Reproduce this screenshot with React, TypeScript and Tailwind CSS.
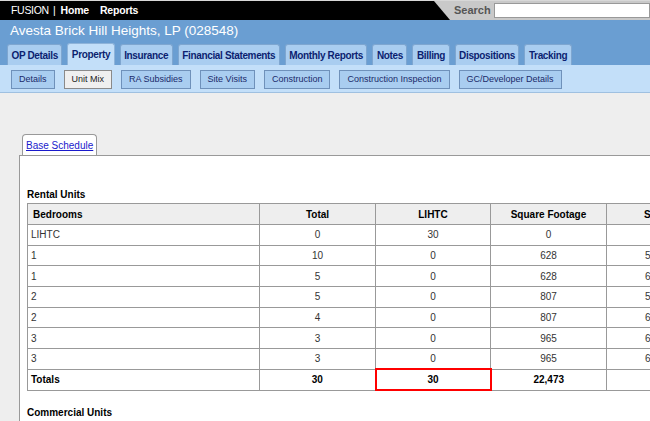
import React from "react";

const tabs = [
  "OP Details",
  "Property",
  "Insurance",
  "Financial Statements",
  "Monthly Reports",
  "Notes",
  "Billing",
  "Dispositions",
  "Tracking",
];

const subTabs = [
  "Details",
  "Unit Mix",
  "RA Subsidies",
  "Site Visits",
  "Construction",
  "Construction Inspection",
  "GC/Developer Details",
];

const rows = [
  ["LIHTC", "0", "30", "0", ""],
  ["1", "10", "0", "628", "5"],
  ["1", "5", "0", "628", "6"],
  ["2", "5", "0", "807", "5"],
  ["2", "4", "0", "807", "6"],
  ["3", "3", "0", "965", "6"],
  ["3", "3", "0", "965", "6"],
];

export default function App() {
  return (
    <div className="w-[650px] h-[421px] overflow-hidden bg-[#eeeeee] font-['Liberation_Sans',Arial,sans-serif]">
      {/* top bar */}
      <div className="h-[20px] flex border-t border-[#d8d8d8] bg-[#c9c9c9]">
        <div className="w-[434px] bg-black flex items-center pl-[11px] text-[10.5px] text-white">
          <span className="tracking-[-0.3px]">FUSION</span>
          <span className="ml-[4px]">|</span>
          <span className="ml-[5px] font-bold tracking-[-0.2px]">Home</span>
          <span className="ml-[11px] font-bold tracking-[-0.2px]">Reports</span>
        </div>
        <svg width="16" height="19" viewBox="0 0 16 19" className="block shrink-0">
          <polygon points="0,0 0,19 16,19" fill="#000" />
        </svg>
        <div className="flex-1 flex items-center pl-[4px]">
          <span className="text-[11px] font-bold text-[#555]">Search</span>
          <div className="ml-[3px] flex-1 h-[15px] bg-white border border-[#999]" />
        </div>
      </div>

      {/* blue header + tabs */}
      <div className="bg-[#6a9ed2]">
        <div className="h-[23px] flex items-center pl-[10px] text-[13.5px] text-white">
          Avesta Brick Hill Heights, LP (028548)
        </div>
        <div className="flex items-end gap-[5px] pl-[7px] h-[22px]">
          {tabs.map((t) =>
            t === "Property" ? (
              <div
                key={t}
                className="h-[22px] px-[3.5px] flex items-center bg-[#c3dff9] border border-b-0 border-[#8fb4da] rounded-t-[3px] text-[10px] font-bold text-[#0c1f70] tracking-[-0.35px]"
              >
                {t}
              </div>
            ) : (
              <div
                key={t}
                className="h-[21px] px-[3.5px] flex items-center bg-[#a9cdf0] border border-b-0 border-[#7ea6d0] rounded-t-[3px] text-[10px] font-bold text-[#0c1f70] tracking-[-0.35px]"
              >
                {t}
              </div>
            )
          )}
        </div>
      </div>

      {/* sub tabs */}
      <div className="h-[28px] bg-[#c3dff9] border-b border-[#9fc0e0] flex items-center gap-[9px] pl-[11px] pt-[2px]">
        {subTabs.map((t) =>
          t === "Unit Mix" ? (
            <div
              key={t}
              className="h-[19px] px-[7px] flex items-center bg-[#efefef] border border-[#8a8a8a] text-[9px] text-[#222]"
            >
              {t}
            </div>
          ) : (
            <div
              key={t}
              className="h-[19px] px-[7px] flex items-center bg-[#a9cdf0] border border-[#6f91ba] text-[9px] text-[#1a2a6a]"
            >
              {t}
            </div>
          )
        )}
      </div>

      {/* body */}
      <div className="pt-[41px] pl-[19px]">
        <div className="flex items-end">
          <div className="ml-[3px] h-[21px] px-[3px] flex items-center bg-white border border-b-0 border-[#999] rounded-t-[4px] text-[10px] text-[#1a1acc] underline">
            Base Schedule
          </div>
        </div>
        <div className="bg-white border-l border-t border-[#999] pt-[31px] pl-[7px] overflow-hidden">
          <div className="text-[10px] font-bold text-black h-[16px]">Rental Units</div>
          <table className="table-fixed border-collapse text-[10px] w-[700px]">
            <colgroup>
              <col className="w-[232px]" />
              <col className="w-[116px]" />
              <col className="w-[115px]" />
              <col className="w-[116px]" />
              <col className="w-[121px]" />
            </colgroup>
            <thead>
              <tr className="h-[21px] bg-[#eeeeee]">
                <th className="border border-[#999] text-left pl-[5px] font-bold">Bedrooms</th>
                <th className="border border-[#999] font-bold">Total</th>
                <th className="border border-[#999] font-bold">LIHTC</th>
                <th className="border border-[#999] font-bold">Square Footage</th>
                <th className="border border-[#999] font-bold text-left pl-[37px]">Section 8</th>
              </tr>
            </thead>
            <tbody>
              {rows.map((r, i) => (
                <tr key={i} className="h-[20.7px] text-[#333]">
                  <td className="border border-[#999] pl-[3px]">{r[0]}</td>
                  <td className="border border-[#999] text-center">{r[1]}</td>
                  <td className="border border-[#999] text-center">{r[2]}</td>
                  <td className="border border-[#999] text-center">{r[3]}</td>
                  <td className="border border-[#999] text-left pl-[38px]">{r[4]}</td>
                </tr>
              ))}
              <tr className="h-[21px] font-bold">
                <td className="border border-[#999] pl-[3px]">Totals</td>
                <td className="border border-[#999] text-center">30</td>
                <td className="border-2 border-[#ff0000] text-center">30</td>
                <td className="border border-[#999] text-center">22,473</td>
                <td className="border border-[#999]"></td>
              </tr>
            </tbody>
          </table>
          <div className="mt-[14px] text-[10px] font-bold text-black">Commercial Units</div>
          <div className="h-[40px]" />
        </div>
      </div>
    </div>
  );
}
